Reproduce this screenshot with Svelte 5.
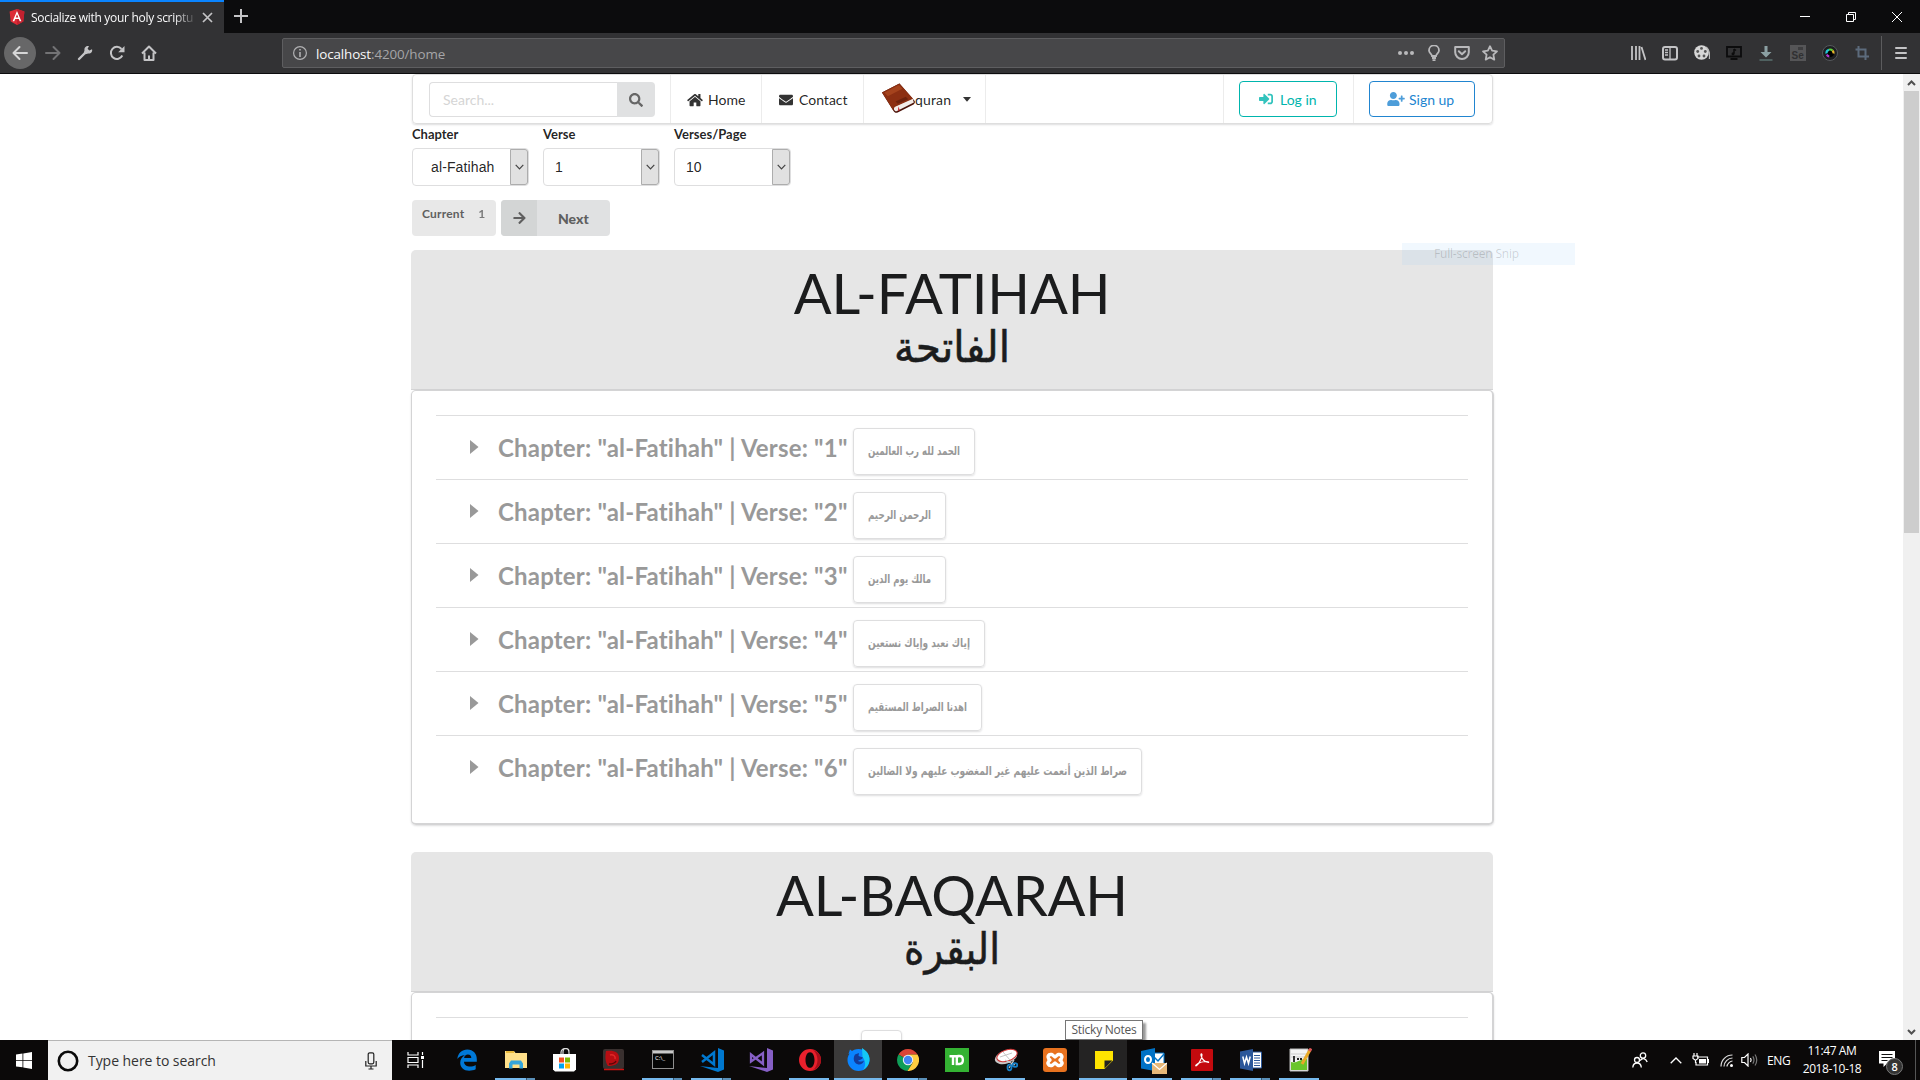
<script>
  const verses = [
    { n: 1, text: 'الحمد لله رب العالمين', w: 92 },
    { n: 2, text: 'الرحمن الرحيم', w: 63 },
    { n: 3, text: 'مالك يوم الدين', w: 63 },
    { n: 4, text: 'إياك نعبد وإياك نستعين', w: 102 },
    { n: 5, text: 'اهدنا الصراط المستقيم', w: 99 },
    { n: 6, text: 'صراط الذين أنعمت عليهم غير المغضوب عليهم ولا الضالين', w: 259 },
  ];
  const selects = [
    { label: 'Chapter', value: 'al-Fatihah', wide: true },
    { label: 'Verse', value: '1' },
    { label: 'Verses/Page', value: '10' },
  ];
  const fa = {
    search: ['0 0 512 512', 'M505 442.7L405.3 343c-4.5-4.5-10.6-7-17-7H372c27.6-35.3 44-79.7 44-128C416 93.1 322.9 0 208 0S0 93.1 0 208s93.1 208 208 208c48.3 0 92.7-16.4 128-44v16.3c0 6.4 2.5 12.5 7 17l99.7 99.7c9.4 9.4 24.6 9.4 33.9 0l28.3-28.3c9.4-9.4 9.4-24.6.1-34zM208 336c-70.7 0-128-57.2-128-128 0-70.7 57.2-128 128-128 70.7 0 128 57.2 128 128 0 70.7-57.2 128-128 128z'],
    home: ['0 0 576 512', 'M488 312.7V456c0 13.3-10.7 24-24 24H348c-6.6 0-12-5.4-12-12V356c0-6.6-5.4-12-12-12h-72c-6.6 0-12 5.4-12 12v112c0 6.6-5.4 12-12 12H112c-13.3 0-24-10.7-24-24V312.7c0-3.6 1.6-7 4.4-9.3l188-154.8c4.4-3.6 10.8-3.6 15.3 0l188 154.8c2.7 2.3 4.3 5.7 4.3 9.3zm83.6-60.9L488 182.9V44.400c0-6.6-5.4-12-12-12h-56c-6.6 0-12 5.4-12 12V117l-89.500-73.700c-17.7-14.6-43.3-14.6-61 0L4.400 251.800c-5.1 4.2-5.8 11.8-1.6 16.9l25.500 31c4.200 5.100 11.800 5.800 16.900 1.600l235.200-193.700c4.400-3.600 10.800-3.600 15.300 0l235.200 193.700c5.100 4.200 12.700 3.500 16.900-1.600l25.500-31c4.200-5.200 3.400-12.700-1.700-16.900z'],
    mail: ['0 0 512 512', 'M502.300 190.800c3.900-3.100 9.700-.2 9.700 4.700V400c0 26.500-21.500 48-48 48H48c-26.500 0-48-21.500-48-48V195.600c0-5 5.700-7.800 9.700-4.700 22.400 17.400 52.100 39.500 154.100 113.600 21.100 15.400 56.700 47.800 92.200 47.600 35.700.3 72-32.800 92.300-47.600 102-74.100 131.600-96.300 154-113.700zM256 320c23.200.4 56.600-29.200 73.400-41.400 132.700-96.300 142.800-104.700 173.400-128.700 5.800-4.500 9.200-11.500 9.200-18.900v-19c0-26.500-21.500-48-48-48H48c-26.500 0-48 21.500-48 48v19c0 7.400 3.400 14.300 9.200 18.900 30.600 23.900 40.700 32.400 173.400 128.700 16.800 12.200 50.200 41.800 73.400 41.400z'],
    arrow: ['0 0 448 512', 'M190.5 66.9l22.2-22.2c9.4-9.4 24.6-9.4 33.9 0L441 239c9.4 9.4 9.4 24.6 0 33.9L246.6 467.3c-9.4 9.4-24.6 9.4-33.9 0l-22.2-22.2c-9.5-9.5-9.3-25 .4-34.3L311.4 296H24c-13.3 0-24-10.7-24-24v-32c0-13.3 10.7-24 24-24h287.4L190.9 101.2c-9.8-9.3-10-24.8-.4-34.3z'],
    login: ['0 0 512 512', 'M416 448h-84c-6.6 0-12-5.4-12-12v-40c0-6.6 5.4-12 12-12h84c17.7 0 32-14.3 32-32V160c0-17.7-14.3-32-32-32h-84c-6.6 0-12-5.4-12-12V76c0-6.6 5.4-12 12-12h84c53 0 96 43 96 96v192c0 53-43 96-96 96zm-47-209L201 71c-15-15-41-4.5-41 17v96H24c-13.3 0-24 10.7-24 24v96c0 13.3 10.7 24 24 24h136v96c0 21.5 26 32 41 17l168-168c9.3-9.4 9.3-24.6 0-34z'],
    signup: ['0 0 640 512', 'M624 208h-64v-64c0-8.8-7.2-16-16-16h-32c-8.8 0-16 7.2-16 16v64h-64c-8.8 0-16 7.2-16 16v32c0 8.8 7.2 16 16 16h64v64c0 8.8 7.2 16 16 16h32c8.8 0 16-7.2 16-16v-64h64c8.8 0 16-7.2 16-16v-32c0-8.8-7.2-16-16-16zm-400 48c70.7 0 128-57.3 128-128S294.7 0 224 0 96 57.3 96 128s57.3 128 128 128zm89.6 32h-16.700c-22.200 10.200-46.900 16-72.900 16s-50.600-5.800-72.900-16h-16.700C60.200 288 0 348.200 0 422.400V464c0 26.500 21.500 48 48 48h352c26.500 0 48-21.500 48-48v-41.600c0-74.200-60.200-134.400-134.400-134.400z'],
  };
</script>

{#snippet icon(name, w, h)}
  <svg width={w} height={h} viewBox={fa[name][0]} fill="currentColor"><path d={fa[name][1]} /></svg>
{/snippet}

{#snippet arabic(text, w, h, base, size, weight)}
  <svg class="arabic" width={w} height={h} font-size={size} font-weight={weight} fill="currentColor">
    <text x={w / 2} y={base} text-anchor="middle" textLength={w} lengthAdjust="spacingAndGlyphs">{text}</text>
  </svg>
{/snippet}

<div class="screen">
  <div class="tabs">
    <div class="tab">
      <svg width="16" height="16" viewBox="0 0 16 16"><path d="M8 0l7.400 2.600-1.100 9.900L8 16l-6.300-3.500L.6 2.600z" fill="#dd2b36" /><path d="M8 0l7.400 2.600-1.100 9.900L8 16z" fill="#c2212f" /><path d="M8 2L3.600 12.200h1.700l.9-2.300h3.600l.9 2.300h1.700zm0 3.300l1.300 3.200H6.700z" fill="#fff" /></svg>
      <span class="title">Socialize with your holy scriptu</span>
      <svg width="11" height="11" viewBox="0 0 11 11" stroke="#c4c4c6" stroke-width="1.700"><path d="M1 1l9 9M10 1l-9 9" /></svg>
    </div>
    <svg class="plus" width="14" height="14" viewBox="0 0 14 14" stroke="#c4c4c6" stroke-width="2"><path d="M7 0v14M0 7h14" /></svg>
    <div class="winctl">
      <svg width="46" height="32" viewBox="0 0 46 32" stroke="#fff" fill="none"><path d="M18 16.500h10" /></svg>
      <svg width="46" height="32" viewBox="0 0 46 32" stroke="#fff" fill="none"><path d="M18.500 14.500h7v7h-7zM20.500 14.500v-2h7v7h-2" /></svg>
      <svg width="46" height="32" viewBox="0 0 46 32" stroke="#fff" fill="none"><path d="M18 12l10 10M28 12l-10 10" /></svg>
    </div>
  </div>

  <div class="toolbar">
    <div class="back"><svg width="16" height="16" viewBox="0 0 16 16" fill="none" stroke="#d6d6d7" stroke-width="2" stroke-linecap="round" stroke-linejoin="round"><path d="M15 8H1.500M7.500 2l-6 6 6 6" /></svg></div>
    <div class="nav"><svg width="16" height="16" viewBox="0 0 16 16" fill="none" stroke="#737375" stroke-width="2" stroke-linecap="round" stroke-linejoin="round"><path d="M1 8h13.500M8.500 2l6 6-6 6" /></svg></div>
    <div class="nav"><svg width="16" height="16" viewBox="0 0 16 16"><path d="M2 14l6.500-6.500" stroke="#c4c4c6" stroke-width="2.400" stroke-linecap="round" /><path d="M15 4.200l-2.700 1.300-1.700-1.700L12 1.100C9.500.4 7 2.300 7.500 5.200L6.800 7.700l1.600 1.600 2.700-.8c3 .3 4.700-1.900 3.900-4.300z" fill="#c4c4c6" /></svg></div>
    <div class="nav"><svg width="16" height="16" viewBox="0 0 16 16" fill="none" stroke="#c4c4c6" stroke-width="2"><path d="M13.300 10.500A6 6 0 1 1 12.500 4" /><path d="M15.500 1v6.300H9.200z" fill="#c4c4c6" stroke="none" /></svg></div>
    <div class="nav"><svg width="16" height="16" viewBox="0 0 16 16" fill="none" stroke="#c4c4c6" stroke-width="2" stroke-linejoin="round"><path d="M1 8.500L8 1.500l7 7M3.500 7.500V15h9V7.500" /><path d="M7 14v-3.500h2V14z" stroke="none" fill="#c4c4c6" /></svg></div>
    <div class="url">
      <svg width="14" height="14" viewBox="0 0 14 14" fill="none" stroke="#b1b1b3"><circle cx="7" cy="7" r="6.400" stroke-width="1.200" /><path d="M7 6v5M7 3v1.600" stroke-width="1.600" /></svg>
      <span class="addr"><b>localhost</b>:4200/home</span>
      <div class="urlicons">
        <svg width="28" height="16" viewBox="0 0 28 16" fill="#b9b9bb"><circle cx="8" cy="8" r="2" /><circle cx="14" cy="8" r="2" /><circle cx="20" cy="8" r="2" /></svg>
        <svg width="28" height="16" viewBox="0 0 28 16" fill="none" stroke="#b9b9bb" stroke-width="1.800"><path d="M12 11c0-2-3-3-3-5.600a5 5 0 0 1 10 0C19 8 16 9 16 11z" /><path d="M12 13h4M12.500 15.200h3" /></svg>
        <svg width="28" height="16" viewBox="0 0 28 16" fill="none" stroke="#b9b9bb" stroke-width="2" stroke-linecap="round" stroke-linejoin="round"><path d="M7.200 2h13.600v5.200a6.800 6.800 0 0 1-13.600 0z" /><path d="M10.800 6.200L14 9.200l3.200-3" /></svg>
        <svg width="28" height="16" viewBox="0 0 28 16" fill="none" stroke="#b9b9bb" stroke-width="1.800" stroke-linejoin="round"><path d="M14 1.200l2.100 4.500 4.900.6-3.600 3.400.9 4.900L14 12.200l-4.300 2.400.9-4.900L7 6.300l4.900-.6z" /></svg>
      </div>
    </div>
    <div class="ext">
      <svg width="16" height="16" viewBox="0 0 16 16" stroke="#c4c4c6" stroke-width="2" fill="none"><path d="M2 1v14M6 1v14M9.500 1v14M11.500 2l4 13" stroke-width="1.800" /></svg>
      <svg width="16" height="16" viewBox="0 0 16 16" stroke="#c4c4c6" stroke-width="2" fill="none"><rect x="1" y="2" width="14" height="12.500" rx="2" /><path d="M8 2v12M3 5h3M3 7.500h3M3 10h3" stroke-width="1.300" /></svg>
      <svg width="16" height="16" viewBox="0 0 16 16"><circle cx="7.500" cy="7.500" r="7.300" fill="#d7d7d7" /><g fill="#555"><circle cx="7.500" cy="3.400" r="1.400" /><circle cx="3.700" cy="6.500" r="1.400" /><circle cx="5" cy="11" r="1.400" /><circle cx="10" cy="11" r="1.400" /><circle cx="11.300" cy="6.500" r="1.400" /></g><path d="M12 2c3 2 4 8 3.500 12" stroke="#bbb" stroke-width="1.500" fill="none" /></svg>
      <svg width="16" height="16" viewBox="0 0 16 16"><path d="M1 2h14v9.500H1zM4.500 14h7" stroke="#0c0c0d" stroke-width="1.800" fill="none" /><path d="M8 4v4.500M8 4l2 1.500" stroke="#0c0c0d" stroke-width="1.500" /><circle cx="7" cy="8.700" r="1.500" fill="#0c0c0d" /></svg>
      <svg width="16" height="16" viewBox="0 0 16 16"><path d="M6.500 1h3v6h4L8 12.500 2.500 7h4z" fill="#8ba0a3" /><path d="M1.500 15h13" stroke="#6c8f8c" /></svg>
      <svg width="16" height="16" viewBox="0 0 16 16"><rect width="16" height="16" fill="#555557" /><text x="1.500" y="14" font-size="10" font-weight="700" fill="#303032">Se</text><path d="M8 2h5v3H8z" fill="#3d3d3f" /></svg>
      <svg width="16" height="16" viewBox="0 0 16 16"><circle cx="8" cy="8" r="7.500" fill="#1d1e22" stroke="#55585c" stroke-width="1" /><circle cx="8" cy="8" r="4" fill="#000" /><g fill="none" stroke-width="2.200"><path d="M4.500 8.500A3.500 3.500 0 0 1 7 4.700" stroke="#24c6d8" /><path d="M7 4.700A3.500 3.500 0 0 1 10.500 5.500" stroke="#5fd33a" /><path d="M10.500 5.500a3.500 3.500 0 0 1 1 3" stroke="#e6b52d" /><path d="M4.800 9.500a3.500 3.500 0 0 0 2.500 2" stroke="#b33ad6" /></g></svg>
      <svg width="16" height="16" viewBox="0 0 16 16" fill="none" stroke="#5c6b7c" stroke-width="2"><path d="M4.500 1v10.500H15M1.500 4.500h10V15" /></svg>
    </div>
    <div class="menu-btn"><svg width="12" height="14" viewBox="0 0 12 14" stroke="#c4c4c6" stroke-width="2" stroke-linecap="round"><path d="M1 2h10M1 7h10M1 12h10" /></svg></div>
  </div>

  <div class="viewport">
    <div class="page">
      <nav class="menu">
        <div class="item searchbox">
          <span class="input">Search...</span>
          <span class="go">{@render icon('search', 14, 14)}</span>
        </div>
        <div class="item home">{@render icon('home', 16, 14)}<span>Home</span></div>
        <div class="item contact">{@render icon('mail', 14, 14)}<span>Contact</span></div>
        <div class="item book">
          <svg width="34" height="30" viewBox="0 0 35 30" preserveAspectRatio="none">
            <path d="M1 9.500L19 .5l15.500 17.300c.8 1.200.3 3-1 3.700l-16.300 8c-1.700.8-3.400.2-4.300-1.500z" fill="#4b1208" />
            <path d="M14 23.500l18.500-8.300 1.300 4.400L16 28.300c-2.300.4-3.600-2.600-2-4.800z" fill="#f2ece8" />
            <path d="M1 9.500L19 .5l14 15.200-18.500 8c-1.500.8-1.700 2.500-1.500 4.200z" fill="#8c2f12" />
            <path d="M3.500 9.500L18.500 2l3.500 3.800-15 7.500z" fill="#a5431d" />
            <path d="M15 18.500l10.500-4.700 2.500 2.400-10.800 4.500z" fill="#6d220d" />
            <path d="M17.800 23.500l1.700 3.800-2 .8z" fill="#c5232c" />
          </svg><span>quran</span>
          <svg class="caret" width="8" height="5" viewBox="0 0 8 5"><path d="M0 0h8L4 4.800z" fill="#333" /></svg>
        </div>
        <div class="item login"><span class="btn teal">{@render icon('login', 14, 14)}Log in</span></div>
        <div class="item signup"><span class="btn blue">{@render icon('signup', 18, 14)}Sign up</span></div>
      </nav>

      <div class="fields">
        {#each selects as s}
          <div class="field">
            <span class="label">{s.label}</span>
            <div class="select" class:wide={s.wide}>
              <span>{s.value}</span>
              <i><svg width="9" height="6" viewBox="0 0 9 6" fill="none" stroke="#444" stroke-width="1.200"><path d="M.7.8l3.800 4 3.800-4" /></svg></i>
            </div>
          </div>
        {/each}
      </div>

      <div class="pager">
        <span class="current">Current<em>1</em></span>
        <span class="next"><i>{@render icon('arrow', 13, 14)}</i><b>Next</b></span>
      </div>

      <header class="banner">
        <h1>AL-FATIHAH</h1>
        {@render arabic('الفاتحة', 116, 66, 50, 43, 400)}
      </header>
      <section class="segment">
        {#each verses as v}
          <div class="verse">
            <svg class="tri" width="9" height="14" viewBox="0 0 9 14"><path d="M0 0l8.500 7L0 14z" fill="#999" /></svg>
            <span class="vt">Chapter: "al-Fatihah" | Verse: "{v.n}"</span>
            <span class="box">{@render arabic(v.text, v.w, 24, 14, 12, 700)}</span>
          </div>
        {/each}
      </section>

      <header class="banner second">
        <h1>AL-BAQARAH</h1>
        {@render arabic('البقرة', 96, 66, 50, 43, 400)}
      </header>
      <section class="segment">
        <div class="verse empty"><span class="box"></span></div>
      </section>
    </div>
    <div class="scroll">
      <svg width="17" height="17" viewBox="0 0 17 17" fill="none" stroke="#505050" stroke-width="2"><path d="M5 11l3.500-3.500L12 11" /></svg>
      <div class="thumb"></div>
      <svg width="17" height="17" viewBox="0 0 17 17" fill="none" stroke="#505050" stroke-width="2"><path d="M5 7l3.500 3.500L12 7" /></svg>
    </div>
  </div>

  <div class="ghost">Full-screen Snip</div>
  <div class="tooltip">Sticky Notes</div>

  <div class="taskbar">
    <div class="start"><svg width="16" height="17" viewBox="0 0 16 17" fill="#fff"><path d="M0 2.400L6.500 1.500V8H0zM7.300 1.400L16 0v8H7.300zM0 8.800h6.500v6.500L0 14.500zM7.300 8.800H16V17l-8.700-1.400z" /></svg></div>
    <div class="search">
      <svg width="22" height="22" viewBox="0 0 22 22"><circle cx="11" cy="11" r="9.200" fill="none" stroke="#0a0a0a" stroke-width="2.600" /></svg>
      <span>Type here to search</span>
      <svg width="12" height="18" viewBox="0 0 12 18" fill="none" stroke="#222" stroke-width="1.200"><rect x="3.200" y=".8" width="5.600" height="11" rx="1.500" /><path d="M.8 9v5h10.400V9M6 14v3M3.500 17h5" /></svg>
    </div>
    <div class="task view"><svg width="18" height="16" viewBox="0 0 18 16" fill="none" stroke="#fff" stroke-width="1.200"><path d="M1 0v3h10V0M1 16v-3h10v3M1 5.500h10v5H1zM15.500 0v3M15.500 8v8" /><path d="M14 4h3v3h-3z" fill="#fff" stroke="none" /></svg></div>
    <div class="task"><svg width="20" height="22" viewBox="0 0 20 22"><path d="M.3 10C1 4 5 .5 10.300.5c6 0 9.500 4.300 9.500 9.500v2.800H7c.2 3.500 3 4.800 6.200 4.800 2 0 3.800-.5 5.500-1.500v4.200c-2 1-4.200 1.400-6.500 1.400-5.500 0-9-3.300-9-8 0-3.500 2-6 4.700-7.500C4.500 6.500 2 7.500.3 10zM7.100 9h7.200c0-2-1-3.500-3.400-3.500C8.900 5.500 7.400 7 7.100 9z" fill="#0078d7" /></svg></div>
    <div class="task run multi"><svg width="22" height="20" viewBox="0 0 22 20"><path d="M0 1h9l1.500 2H22v15H0z" fill="#ffe08a" /><path d="M1 1h8v2H1z" fill="#e9b93c" /><path d="M4 18.500v-5l2-3h10l2 3v5h-3.500v-4h-7v4z" fill="#35a6dc" /></svg></div>
    <div class="task"><svg width="23" height="24" viewBox="0 0 23 24"><path d="M8 7V4.500a4 4 0 0 1 8 0V7M10 7V3.500a3 3 0 0 1 6 0" stroke="#ddd" fill="none" stroke-width="1.200" /><path d="M0 6h23v15.500l-2 2H2l-2-2z" fill="#fff" /><path d="M6 9.500h5v5H6z" fill="#f25022" /><path d="M12 9.500h5v5h-5z" fill="#7fba00" /><path d="M6 15.500h5v5H6z" fill="#00a4ef" /><path d="M12 15.500h5v5h-5z" fill="#ffb900" /></svg></div>
    <div class="task"><svg width="22" height="22" viewBox="0 0 22 22"><rect x="0" y="0" width="21" height="20" rx="2" fill="#39302f" /><path d="M3 2c8-1 13 1 13 7s-4 8-11 8c-3-4-3-10-2-15z" fill="#b80d12" /><path d="M7 6c3-1 6 1 5 4" stroke="#e02a28" fill="none" stroke-width="1.500" /><path d="M6 15c3 0 6-1 7-3" stroke="#5b0507" fill="none" stroke-width="1.500" /><path d="M1 20.500h20" stroke="#c11" stroke-width="1.500" /></svg></div>
    <div class="task run multi"><svg width="22" height="19" viewBox="0 0 22 19"><rect x=".5" y=".5" width="21" height="18" fill="#050505" stroke="#8e8e8e" /><path d="M1 1h20v2.500H1z" fill="#c9c9c9" /><text x="3" y="10" font-size="6" fill="#fff">C:\_</text></svg></div>
    <div class="task run multi"><svg width="24" height="24" viewBox="0 0 24 24"><path d="M18 0l6 2.500v19L18 24 0 18l18 2z" fill="#0078cf" /><path d="M2 7l12 9.500V4.500L2 14" fill="none" stroke="#0078cf" stroke-width="2.500" /></svg></div>
    <div class="task"><svg width="24" height="24" viewBox="0 0 24 24"><path d="M18 0l6 2.500v19L18 24 0 18l18 2z" fill="#865fc5" /><path d="M2 6.500v7l12-8.500v11z" fill="none" stroke="#865fc5" stroke-width="2.300" /></svg></div>
    <div class="task run"><svg width="22" height="22" viewBox="0 0 22 22"><path fill-rule="evenodd" d="M11 0a11 11 0 1 0 0 22 11 11 0 0 0 0-22zm0 3.200c2.800 0 4.500 3.500 4.500 7.800s-1.700 7.800-4.500 7.800S6.500 15.300 6.500 11 8.200 3.200 11 3.200z" fill="#e8202c" /><path d="M14 1c6 2 8 6 8 10s-2 8-8 10c6-5 6-15 0-20z" fill="#a90f1a" /></svg></div>
    <div class="task run active"><svg width="23" height="23" viewBox="0 0 23 23"><circle cx="11.500" cy="12" r="11" fill="#0a84ff" /><path d="M15 0c5 3 8 7 7.500 12.500-.5 4-3 7.500-6.500 9.500 3-4 3-9-.5-13z" fill="#14c8f5" /><path d="M1.500 6L3 1.500l4 3z" fill="#0a84ff" /><path d="M8 6.500l4-1.500-.5 3 4.500 1.500c-1 2.500-4 2-5 3.500 3 1 4.500.5 6-.5-1 4.500-6 5-8.500 2.500S6.500 9 8 6.500z" fill="#123c9c" /></svg></div>
    <div class="task run multi"><svg width="22" height="22" viewBox="0 0 22 22"><path d="M11 11L1.500 5.500A11 11 0 0 1 20.500 5.500H11z" fill="#db4437" /><path d="M11 11L1.500 5.500A11 11 0 0 0 10.500 22l5-8.500z" fill="#0f9d58" /><path d="M11 5.500h9.500A11 11 0 0 1 10.500 22l5.300-8.500z" fill="#ffcd40" /><circle cx="11" cy="11" r="5.200" fill="#f1f1f1" /><circle cx="11" cy="11" r="4.200" fill="#4285f4" /></svg></div>
    <div class="task"><svg width="24" height="24" viewBox="0 0 24 24"><path d="M0 0h24v24H0z" fill="#34b233" /><path d="M4.500 8.200H14M8 8v9M12.500 8h2c4.500 0 4.500 8 0 8h-2.700V8" fill="none" stroke="#fff" stroke-width="2.400" /></svg></div>
    <div class="task run"><svg width="24" height="24" viewBox="0 0 24 24"><ellipse cx="12" cy="9" rx="11.500" ry="6.500" fill="#c9c9c9" transform="rotate(-18 12 9)" /><ellipse cx="13" cy="7.500" rx="10.500" ry="5.500" fill="#fff" stroke="#cf3535" transform="rotate(-18 13 7.500)" /><path d="M6 9l12-4M9 4l7 8" stroke="#c5c5c5" /><path d="M11 12l10 5M20 12l-5 8" stroke="#ccc" stroke-width="1.300" /><g fill="none" stroke="#1681c8" stroke-width="1.800"><ellipse cx="15.500" cy="19.500" rx="2" ry="2.800" /><ellipse cx="21" cy="17" rx="2.300" ry="1.800" /></g></svg></div>
    <div class="task"><svg width="24" height="24" viewBox="0 0 24 24"><rect width="24" height="24" rx="3" fill="#e8721f" /><path d="M9 6.500H7.500a2.500 2.500 0 0 0-2 4L7 12l-1.500 1.500a2.500 2.500 0 0 0 2 4H9l3-2.500 3 2.500h1.500a2.500 2.500 0 0 0 2-4L17 12l1.500-1.500a2.500 2.500 0 0 0-2-4H15L12 9z" fill="none" stroke="#fff" stroke-width="3.400" stroke-linejoin="round" /></svg></div>
    <div class="task run hover"><svg width="18" height="18" viewBox="0 0 18 18"><path d="M0 0h18v9.500L9.500 18H0z" fill="#ffe400" /><path d="M9.500 9.500h8L9.500 17.500z" fill="#222" /></svg></div>
    <div class="task run"><svg class="outlook" width="26" height="26" viewBox="0 0 26 26"><path d="M11 5h12v12H11z" fill="#fff" stroke="#0072c6" /><path d="M13 9l4 4 6-7" stroke="#0072c6" stroke-width="1.500" fill="none" /><path d="M0 3l14-3v23L0 20.500z" fill="#0072c6" /><ellipse cx="7" cy="11.500" rx="3" ry="3.600" fill="none" stroke="#fff" stroke-width="2" /><path d="M11 15h15v11H11z" fill="#e8b878" /><path d="M11 15l7.500 6.500L26 15" fill="none" stroke="#fff" stroke-width="1.300" /></svg></div>
    <div class="task run multi"><svg width="22" height="22" viewBox="0 0 22 22"><rect width="22" height="22" rx="1" fill="#c40a0e" /><path d="M5 17c2-1 6-7 6-11 0-2-1.500-1.500-1 .5C11 10 14 13 17.500 13.500c1.500-1.500-6-1.500-10.500 1-2 1.200-2.800 2.500-2 2.500z" fill="none" stroke="#fff" stroke-width="1.100" /></svg></div>
    <div class="task run multi"><svg width="22" height="22" viewBox="0 0 22 22"><path d="M12 3h9.500v16H12z" fill="#fff" stroke="#2b579a" /><path d="M14 6.500h6M14 9h6M14 11.500h6M14 14h6M14 16.500h6" stroke="#2b579a" /><path d="M0 2.500L13 0v22L0 19.500z" fill="#2b579a" /><path d="M2.800 7.500l1.700 7 2-6.500 2 6.500 1.700-7" fill="none" stroke="#fff" stroke-width="1.500" /></svg></div>
    <div class="task run"><svg width="24" height="24" viewBox="0 0 24 24"><path d="M2 1h18v22H2z" fill="#f4f4f4" stroke="#bbb" /><path d="M3 14c5 2 9-3 16-3v11H3z" fill="#6ac52b" /><path d="M3 6h16M3 9h16" stroke="#ccc" /><path d="M6 8v6M9 11h2M12 11h2" stroke="#222" stroke-width="1.800" /><path d="M14 16L22 2" stroke="#e9a928" stroke-width="3" /><path d="M21.500 3L23 .5" stroke="#d55" stroke-width="3" /></svg></div>
    <div class="tray">
      <svg width="16" height="16" viewBox="0 0 16 16" fill="none" stroke="#fff" stroke-width="1.300"><circle cx="11" cy="3.500" r="2.700" /><circle cx="5" cy="8" r="2.500" /><path d="M8 8.500c3-3 6-2 7.200 1.500M.8 15.500c.5-6 8-6 8.500 0" /></svg>
      <svg class="up" width="12" height="7" viewBox="0 0 12 7" fill="none" stroke="#fff" stroke-width="1.300"><path d="M.7 6.300L6 1l5.300 5.300" /></svg>
      <svg class="bat" width="17" height="14" viewBox="0 0 17 14" fill="none" stroke="#fff" stroke-width="1.200"><path d="M5 4h10.500v8H4V9M2 0v3M5 0v3M1 3h5v2.500L4 7H3L1 5.500zM3.500 7v3" /><path d="M7 6h7v4.500H7z" fill="#fff" stroke="none" /><path d="M16.500 6v4" /></svg>
      <svg class="wifi" width="13" height="13" viewBox="0 0 13 13" fill="none" stroke="#ddd" stroke-width="1.200"><path d="M1 12.500C1 6 6 1 12.500 1M4 12.500C4 8 8 4 12.500 4M7 12.500C7 10 10 7 12.500 7" /><circle cx="11.500" cy="11.500" r="1.500" fill="#fff" stroke="none" /></svg>
      <svg class="vol" width="17" height="14" viewBox="0 0 17 14" fill="none" stroke="#fff" stroke-width="1.200"><path d="M.8 4.500h2.700L7 1v12L3.500 9.500H.8z" /><path d="M9.500 5q1.300 2 0 4" /><path d="M11.800 3.300q2.400 3.700 0 7.400M14 1.500q3.500 5.500 0 11" stroke="#777" /></svg>
      <span class="eng">ENG</span>
      <span class="clock"><span>11:47 AM</span><span>2018-10-18</span></span>
      <svg class="note" width="25" height="24" viewBox="0 0 25 24"><path d="M0 0h16v12.500H8l-3.500 3.500v-3.500H0z" fill="#fff" /><path d="M2.500 3.500h11M2.500 6.500h11M2.500 9.500h6" stroke="#111" stroke-width="1.200" /><circle cx="15.500" cy="15.500" r="8" fill="#333" stroke="#777" /><text x="15.500" y="19.500" text-anchor="middle" font-size="11" font-weight="600" fill="#fff">8</text></svg>
      <span class="edge"></span>
    </div>
  </div>
</div>

<style>
  :global(body) { margin: 0; overflow: hidden; background: #fff; }
  * { box-sizing: border-box; }
  svg { display: block; flex: none; }
  .screen { width: 1920px; height: 1080px; position: relative; overflow: hidden; display: flex; flex-direction: column; font-family: 'Lato', sans-serif; font-size: 14px; color: rgba(0, 0, 0, .87); font-variant-ligatures: no-common-ligatures; }

  .tabs { height: 33px; flex: none; background: #0c0c0d; display: flex; font-family: 'Open Sans', sans-serif; }
  .tab { width: 224px; background: #323234; border-top: 2px solid #0a84ff; display: flex; align-items: center; padding: 0 0 1px 9px; }
  .title { width: 168px; margin: 1px 3px 0 6px; font-size: 12px; line-height: 18px; letter-spacing: -.3px; color: #f9f9fa; white-space: nowrap; mask-image: linear-gradient(to right, #000 143px, transparent 166px); }
  .plus { margin: 9px 0 0 10px; }
  .winctl { margin-left: auto; display: flex; }
  .toolbar { height: 41px; flex: none; background: #323234; border-bottom: 1px solid #0c0c0d; display: flex; align-items: center; padding-left: 4px; }
  .back { width: 32px; height: 32px; border-radius: 50%; background: #676768; display: grid; place-items: center; margin-right: 1px; }
  .nav { width: 32px; display: grid; place-items: center; }
  .url { margin-left: 117px; width: 1223px; height: 30px; background: #474749; border: 1px solid #5e5e60; border-radius: 2px; display: flex; align-items: center; padding-left: 10px; }
  .addr { margin: 2px 0 0 9px; font: 13.400px/20px 'Open Sans', sans-serif; color: #a5a5a7; letter-spacing: -.12px; }
  .addr b { font-weight: 400; color: #f9f9fa; }
  .urlicons { margin-left: auto; display: flex; }
  .ext { margin-left: 125px; display: flex; gap: 16px; font-family: 'Liberation Sans', sans-serif; }
  .menu-btn { margin-left: 11px; border-left: 1px solid #5c5c5e; height: 34px; padding-left: 13px; display: flex; align-items: center; }

  .viewport { height: 966px; flex: none; display: flex; overflow: hidden; }
  .page { width: 1903px; padding: 0 410px 0 411px; overflow: hidden; }
  .menu { height: 50px; margin: 0 1px; width: 1081px; display: flex; border: 1px solid #dedede; border-radius: 4px; box-shadow: 0 1px 2px rgba(34, 36, 38, .15); }
  .item { display: flex; align-items: center; border-right: 1px solid #ececec; padding-top: 1px; line-height: 14px; }
  .item svg { color: #333; }
  .searchbox { width: 258px; padding-left: 16px; }
  .input { width: 188px; height: 35px; border: 1px solid #dededf; border-right: 0; border-radius: 4px 0 0 4px; padding: 10px 0 0 13px; color: #d5d5d5; }
  .go { width: 38px; height: 35px; background: #e0e1e2; border-radius: 0 4px 4px 0; display: grid; place-items: center; }
  .go svg { color: #666; }
  .home { width: 91px; padding-left: 16px; gap: 5px; }
  .contact { width: 102px; padding-left: 17px; gap: 6px; }
  .book { width: 122px; padding-left: 17px; }
  .book > svg:first-child { margin-top: -3px; }
  .book span { letter-spacing: .15px; }
  .caret { margin: -1px 0 0 12px; }
  .login { margin-left: auto; width: 131px; border-left: 1px solid #ececec; padding: 0 0 1px 15px; }
  .signup { width: 138px; border-right: 0; padding: 0 0 1px 15px; }
  .btn { height: 36px; border: 1px solid; border-radius: 4px; display: flex; align-items: center; white-space: nowrap; padding-top: 2px; }
  .btn svg { color: inherit; opacity: .8; margin-top: -2px; }
  .teal { width: 98px; color: #00b5ad; padding-left: 19px; gap: 7px; }
  .blue { width: 106px; color: #2185d0; padding-left: 17px; gap: 4px; }

  .fields { display: flex; gap: 14px; margin: 1px 0 0 1px; }
  .field { width: 117px; }
  .label { display: block; font-size: 13px; font-weight: 700; line-height: 18px; margin-bottom: 5px; }
  .select { height: 38px; border: 1px solid #dededf; border-radius: 4px; display: flex; align-items: center; padding-left: 11px; font: 14px 'Liberation Sans', sans-serif; }
  .wide { padding-left: 18px; letter-spacing: .12px; }
  .select i { margin-left: auto; width: 18px; height: 36px; background: #e1e1e1; border: 1px solid #adadad; border-radius: 0 3px 3px 0; display: grid; place-items: center; }
  .pager { display: flex; gap: 5px; margin: 14px 0 0 1px; color: #5f5f5f; font-weight: 700; }
  .current { width: 84px; height: 36px; background: #e8e8e8; border-radius: 4px; padding: 7px 0 0 10px; font-size: 12px; line-height: 14px; letter-spacing: .2px; }
  .current em { font-style: normal; margin-left: 14px; opacity: .8; }
  .next { width: 109px; height: 36px; background: #e0e1e2; border-radius: 4px; display: flex; align-items: center; overflow: hidden; }
  .next i { width: 36px; height: 36px; background: #d3d5d5; display: grid; place-items: center; }
  .next b { margin-left: 21px; }

  .banner { height: 140px; margin-top: 14px; background: #e6e6e6; border-radius: 5px 5px 0 0; border-bottom: 1px solid #d4d4d5; display: flex; flex-direction: column; align-items: center; }
  .second { margin-top: 27px; }
  h1 { margin: 0; padding-top: 13px; font-size: 56px; line-height: 59px; height: 62px; font-weight: 400; color: #1b1c1d; white-space: nowrap; letter-spacing: -.15px; }
  .banner svg { color: #1b1c1d; stroke: #1b1c1d; stroke-width: .6px; }
  .arabic { font-family: 'DejaVu Sans', sans-serif; overflow: visible; }
  .segment { height: 435px; margin-right: -1px; border: 1px solid #d4d4d5; border-width: 1px 2px 2px 1px; border-radius: 5px; padding: 24px 24px 0; box-shadow: 0 1px 2px rgba(34, 36, 38, .15); }
  .verse { height: 64px; border-top: 1px solid #dededf; display: flex; align-items: flex-start; padding-left: 34px; color: #999; }
  .tri { margin-top: 24px; }
  .vt { width: 355px; margin-left: 19px; margin-top: 17px; font-size: 24px; font-weight: 700; line-height: 30px; letter-spacing: .19px; white-space: nowrap; }
  .box { margin-top: 12px; height: 47px; border: 1px solid #dededf; border-radius: 4px; box-shadow: 0 1px 2px rgba(34, 36, 38, .15); padding: 12px 14px 0; }
  .empty { padding-left: 425px; }
  .empty .box { width: 41px; }

  .scroll { width: 17px; background: #f0f0f0; display: flex; flex-direction: column; }
  .thumb { height: 442px; margin: 0 1px auto; background: #cdcdcd; }

  .ghost { position: absolute; left: 1402px; top: 243px; width: 173px; height: 22px; padding-left: 32px; background: rgba(145, 201, 247, .13); font: 12px/21px 'Open Sans', sans-serif; letter-spacing: -.2px; color: rgba(0, 0, 0, .16); white-space: nowrap; }
  .tooltip { position: absolute; left: 1065px; top: 1020px; width: 78px; height: 20px; border: 1px solid #767676; background: #fff; box-shadow: 3px 3px 2px rgba(0, 0, 0, .4); font: 12px/18px 'Open Sans', sans-serif; letter-spacing: -.25px; color: #575757; text-align: center; white-space: nowrap; z-index: 1; }

  .taskbar { height: 40px; flex: none; background: #0b0909; display: flex; position: relative; z-index: 2; font-family: 'Open Sans', sans-serif; }
  .start { width: 48px; display: grid; place-items: center; }
  .search { width: 344px; background: #f1f1f1; border-top: 1px solid #b5b5b5; display: flex; align-items: center; padding: 0 15px 0 9px; font-size: 14px; color: #333; }
  .search span { margin: 0 auto 0 9px; letter-spacing: -.05px; }
  .task { width: 49px; display: grid; place-items: center; position: relative; padding-bottom: 1px; }
  .view { width: 50px; padding-right: 2px; }
  .run::after { content: ''; position: absolute; left: 4px; bottom: 0; width: 40px; height: 2px; background: #76b9ed; }
  .multi::after { background: linear-gradient(to right, #76b9ed 31px, #35556d 31px 32px, #5a8fb8 32px); }
  .active, .hover { background: linear-gradient(#3b3a3a, #3b3a3a) 0 0 / 48px 100% no-repeat; }
  .hover { background: linear-gradient(#242323, #242323) 0 0 / 48px 100% no-repeat; }
  .active::after, .hover::after { left: 0; width: 48px; }
  .outlook { margin: 3px 0 0 3px; }
  .tray { margin-left: auto; display: flex; align-items: center; color: #fff; font-size: 12px; letter-spacing: -.2px; height: 40px; }
  .up { margin-left: 22px; }
  .bat { margin-left: 10px; }
  .wifi { margin-left: 11px; }
  .vol { margin-left: 8px; }
  .eng { margin-left: 9px; width: 30px; letter-spacing: -.4px; }
  .clock { width: 70px; text-align: center; line-height: 18px; display: flex; flex-direction: column; letter-spacing: -.4px; }
  .note { margin: 6px 0 0 12px; }
  .edge { width: 1px; height: 40px; background: #555; margin: 0 4px 0 11px; }
</style>
